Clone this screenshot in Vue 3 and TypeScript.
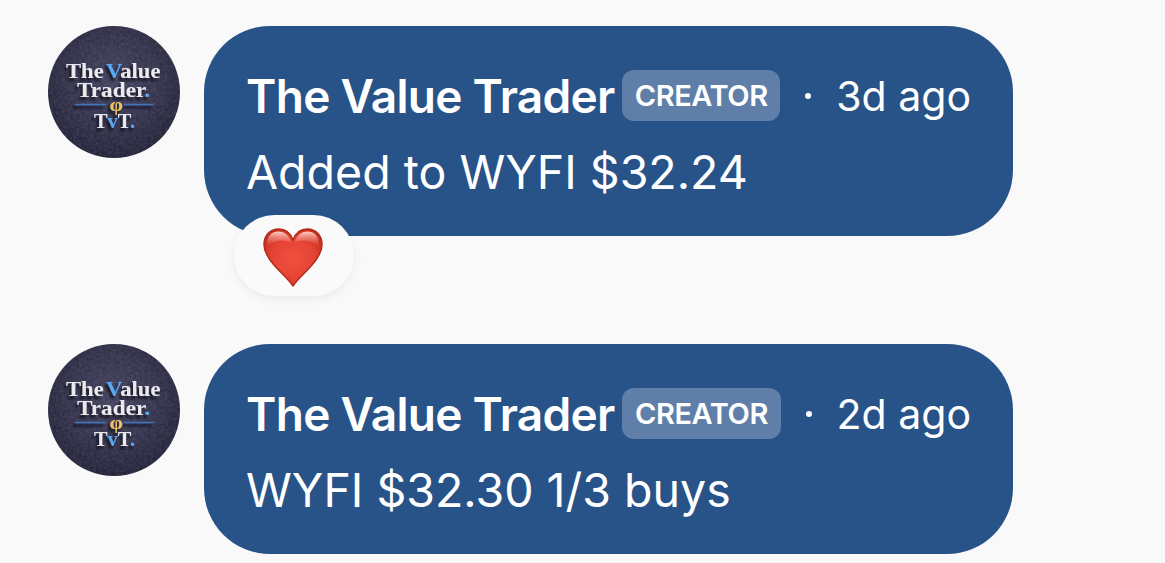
<script setup lang="ts">
interface Message {
  id: number
  author: string
  role: string
  time: string
  body: string
  bodyClass: string
  liked: boolean
}

const messages: Message[] = [
  { id: 1, author: 'The Value Trader', role: 'CREATOR', time: '3d ago', body: 'Added to WYFI $32.24', bodyClass: 'body-first', liked: true },
  { id: 2, author: 'The Value Trader', role: 'CREATOR', time: '2d ago', body: 'WYFI $32.30 1/3 buys', bodyClass: 'body-second', liked: false },
]
</script>

<template>
  <main class="thread">
    <article v-for="m in messages" :key="m.id" class="message">
      <svg class="avatar" viewBox="0 0 132 132" role="img" aria-label="The Value Trader">
        <defs>
          <radialGradient :id="`bg${m.id}`" cx="50%" cy="42%" r="60%">
            <stop offset="0" stop-color="#45435f" />
            <stop offset="0.55" stop-color="#35344c" />
            <stop offset="1" stop-color="#222238" />
          </radialGradient>
          <filter :id="`grain${m.id}`" x="0" y="0" width="100%" height="100%">
            <feTurbulence type="fractalNoise" baseFrequency="0.35" numOctaves="2" seed="4" />
            <feColorMatrix values="0 0 0 0 0.5  0 0 0 0 0.5  0 0 0 0 0.65  0.6 0 0 0 -0.18" />
            <feComposite in2="SourceGraphic" operator="in" />
          </filter>
          <filter :id="`shade${m.id}`" x="-20%" y="-20%" width="140%" height="150%">
            <feDropShadow dx="-2" dy="3" stdDeviation="1.3" flood-color="#0b0b18" flood-opacity="0.85" />
          </filter>
        </defs>
        <circle cx="66" cy="66" r="66" :fill="`url(#bg${m.id})`" />
        <circle cx="66" cy="66" r="66" fill="#fff" :filter="`url(#grain${m.id})`" opacity="0.4" />
        <g class="logo" :filter="`url(#shade${m.id})`">
          <text x="18" y="52" textLength="94.5" lengthAdjust="spacingAndGlyphs">The<tspan dx="2" class="sky">V</tspan>alue</text>
          <text x="29" y="71" textLength="73" lengthAdjust="spacingAndGlyphs">Trader<tspan class="sky">.</tspan></text>
          <path d="M27 78.5H58M76 78.5H105.5" stroke="#3f76bd" stroke-width="1.5" />
          <text x="61.5" y="84.5" class="phi" textLength="13.5" lengthAdjust="spacingAndGlyphs">φ</text>
          <text x="46" y="101.7" class="short" textLength="41" lengthAdjust="spacingAndGlyphs">T<tspan class="sky">v</tspan>T<tspan class="sky">.</tspan></text>
        </g>
      </svg>

      <section class="bubble">
        <header class="meta">
          <span class="author">{{ m.author }}</span>
          <span class="role">{{ m.role }}</span>
          <span class="dot"></span>
          <time class="time">{{ m.time }}</time>
        </header>
        <p class="body" :class="m.bodyClass">{{ m.body }}</p>

        <div v-if="m.liked" class="reaction">
          <svg class="heart" viewBox="0 0 60 59">
            <defs>
              <radialGradient id="heartFill" cx="50%" cy="52%" r="58%">
                <stop offset="0" stop-color="#f0503f" />
                <stop offset="0.6" stop-color="#e64536" />
                <stop offset="1" stop-color="#c72f20" />
              </radialGradient>
              <linearGradient id="heartGloss" x1="0" y1="0" x2="0" y2="1">
                <stop offset="0" stop-color="#ffe3dc" stop-opacity="0.9" />
                <stop offset="1" stop-color="#f47a69" stop-opacity="0" />
              </linearGradient>
            </defs>
            <path d="M30 58C26 52 19 46 11 37C4 29 1 23 1 16.5C1 7.5 7.5 1 15.5 1C22 1 27.5 5 30 12C32.500 5 38 1 44.500 1C52.500 1 59 7.500 59 16.500C59 23 56 29 49 37C41 46 34 52 30 58Z" fill="url(#heartFill)" stroke="#b32a1b" stroke-width="1.5" stroke-linejoin="round" />
            <path d="M4 16C4 8 9 3.500 15.500 3.500C22 3.500 26.500 8 28 14C20 11 11 12 4 19Z" fill="url(#heartGloss)" />
            <path d="M56 16C56 8 51 3.500 44.500 3.500C38 3.500 33.500 8 32 14C40 11 49 12 56 19Z" fill="url(#heartGloss)" />
          </svg>
        </div>
      </section>
    </article>
  </main>
</template>

<style>
body {
  margin: 0;
  background: #f9f9f9;
  overflow: hidden;
}
</style>

<style scoped>
.thread {
  box-sizing: border-box;
  height: 563px;
  padding: 26px 0 0 48px;
  display: flex;
  flex-direction: column;
  gap: 108px;
  overflow: hidden;
  font-family: Inter, "Liberation Sans", sans-serif;
  color: #fff;
}
.message {
  display: flex;
  align-items: flex-start;
  gap: 24px;
}
.avatar {
  width: 132px;
  height: 132px;
  flex: none;
}
.logo text {
  font-family: "Liberation Serif", serif;
  font-weight: 700;
  font-size: 21.5px;
  fill: #e9e9ee;
}
.logo .sky {
  fill: #5ba8f3;
}
.logo text.phi {
  font-size: 19px;
  fill: #edc365;
}
.logo text.short {
  font-size: 20px;
}
.bubble {
  position: relative;
  box-sizing: border-box;
  width: 809px;
  height: 210px;
  padding: 44px 42px 0;
  border-radius: 66px;
  background: #285389;
}
.meta {
  display: flex;
  align-items: center;
  height: 51px;
  white-space: nowrap;
}
.author {
  width: 378px;
  font-size: 46px;
  line-height: 48px;
  font-weight: 600;
  letter-spacing: -0.7px;
}
.role {
  box-sizing: border-box;
  width: 159px;
  height: 51px;
  border-radius: 12px;
  background: #5f7fa9;
  text-align: center;
  font-size: 29px;
  line-height: 52px;
  font-weight: 600;
  letter-spacing: -0.4px;
}
.dot {
  width: 6px;
  height: 6px;
  margin: 0 25px;
  border-radius: 50%;
  background: #fff;
}
.time {
  font-size: 41px;
  line-height: 48px;
}
.body {
  margin: 22px 0 0;
  font-size: 46.5px;
  line-height: 58px;
  white-space: nowrap;
}
.reaction {
  position: absolute;
  left: 30px;
  top: 189px;
  width: 120px;
  height: 81px;
  border-radius: 41px;
  background: #fafafa;
  box-shadow: 0 3px 10px rgba(0, 0, 0, 0.06);
  display: flex;
  justify-content: center;
  align-items: center;
}
.heart {
  width: 60px;
  height: 59px;
  margin: 3px 3px 0 0;
}
</style>
